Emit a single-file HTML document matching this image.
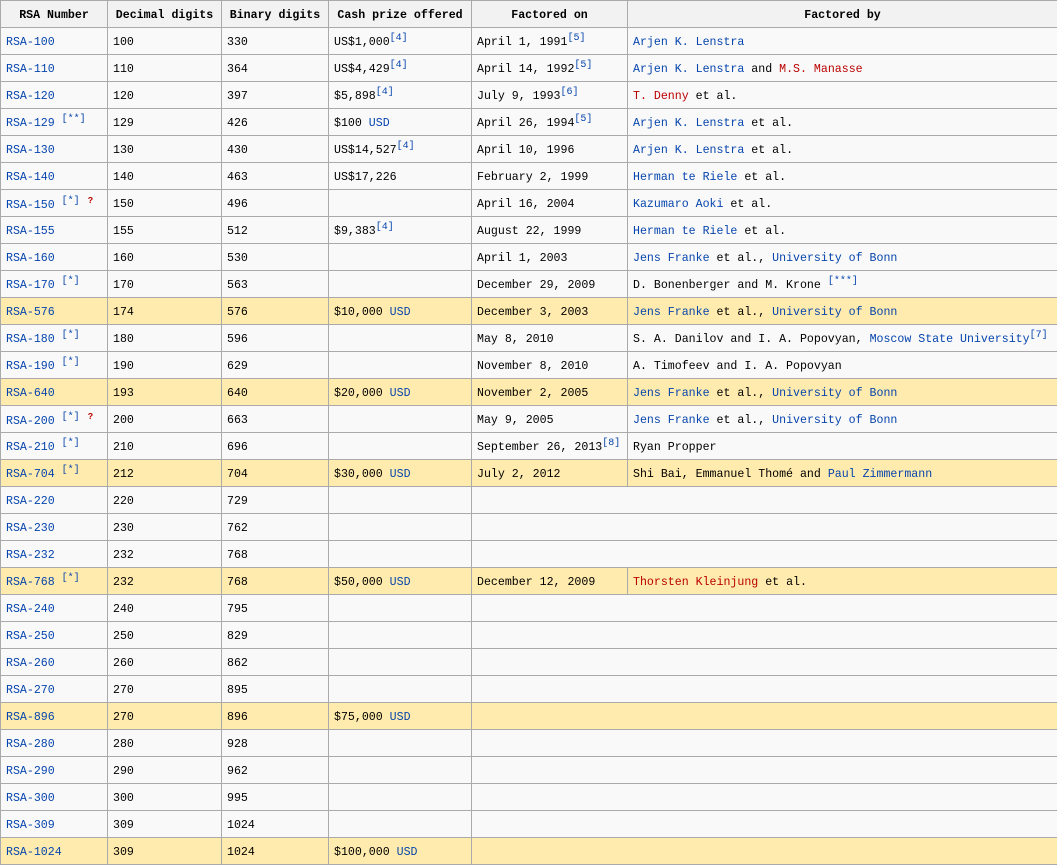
<!DOCTYPE html>
<html><head><meta charset="utf-8"><style>
body{margin:0;background:#fff;}
table{border-collapse:collapse;table-layout:fixed;width:1057px;background:#f9f9f9;font-family:"Liberation Mono","Noto Serif CJK SC",monospace;font-size:11.6px;color:#000;}
td,th{border:1px solid #aaa;height:24px;padding:2px 5px 0 5px;white-space:nowrap;overflow:hidden;}
th{background:#f2f2f2;font-weight:bold;height:24px;}
tr.h td{background:#ffebad;}
a{color:#0645ad;text-decoration:none;}
a.r{color:#ba0000;}
sup{font-size:10px;line-height:0;vertical-align:5px;}
sup a{color:#0645ad;}
.q{color:#ba0000;font-weight:bold;font-size:9px;margin-left:8px;vertical-align:5px;}
</style></head><body>
<table>
<colgroup><col style="width:107px"><col style="width:114px"><col style="width:107px"><col style="width:143px"><col style="width:156px"><col style="width:430px"></colgroup>
<tr><th>RSA Number</th><th>Decimal digits</th><th>Binary digits</th><th>Cash prize offered</th><th>Factored on</th><th>Factored by</th></tr>
<tr><td><a>RSA-100</a></td><td>100</td><td>330</td><td>US$1,000<sup><a>[4]</a></sup></td><td>April 1, 1991<sup><a>[5]</a></sup></td><td><a>Arjen K. Lenstra</a></td></tr>
<tr><td><a>RSA-110</a></td><td>110</td><td>364</td><td>US$4,429<sup><a>[4]</a></sup></td><td>April 14, 1992<sup><a>[5]</a></sup></td><td><a>Arjen K. Lenstra</a> and <a class="r">M.S. Manasse</a></td></tr>
<tr><td><a>RSA-120</a></td><td>120</td><td>397</td><td>$5,898<sup><a>[4]</a></sup></td><td>July 9, 1993<sup><a>[6]</a></sup></td><td><a class="r">T. Denny</a> et al.</td></tr>
<tr><td><a>RSA-129</a> <sup><a>[**]</a></sup></td><td>129</td><td>426</td><td>$100 <a>USD</a></td><td>April 26, 1994<sup><a>[5]</a></sup></td><td><a>Arjen K. Lenstra</a> et al.</td></tr>
<tr><td><a>RSA-130</a></td><td>130</td><td>430</td><td>US$14,527<sup><a>[4]</a></sup></td><td>April 10, 1996</td><td><a>Arjen K. Lenstra</a> et al.</td></tr>
<tr><td><a>RSA-140</a></td><td>140</td><td>463</td><td>US$17,226</td><td>February 2, 1999</td><td><a>Herman te Riele</a> et al.</td></tr>
<tr><td><a>RSA-150</a> <sup><a>[*]</a></sup><span class="q">?</span></td><td>150</td><td>496</td><td></td><td>April 16, 2004</td><td><a>Kazumaro Aoki</a> et al.</td></tr>
<tr><td><a>RSA-155</a></td><td>155</td><td>512</td><td>$9,383<sup><a>[4]</a></sup></td><td>August 22, 1999</td><td><a>Herman te Riele</a> et al.</td></tr>
<tr><td><a>RSA-160</a></td><td>160</td><td>530</td><td></td><td>April 1, 2003</td><td><a>Jens Franke</a> et al., <a>University of Bonn</a></td></tr>
<tr><td><a>RSA-170</a> <sup><a>[*]</a></sup></td><td>170</td><td>563</td><td></td><td>December 29, 2009</td><td>D. Bonenberger and M. Krone <sup><a>[***]</a></sup></td></tr>
<tr class="h"><td><a>RSA-576</a></td><td>174</td><td>576</td><td>$10,000 <a>USD</a></td><td>December 3, 2003</td><td><a>Jens Franke</a> et al., <a>University of Bonn</a></td></tr>
<tr><td><a>RSA-180</a> <sup><a>[*]</a></sup></td><td>180</td><td>596</td><td></td><td>May 8, 2010</td><td>S. A. Danilov and I. A. Popovyan, <a>Moscow State University</a><sup><a>[7]</a></sup></td></tr>
<tr><td><a>RSA-190</a> <sup><a>[*]</a></sup></td><td>190</td><td>629</td><td></td><td>November 8, 2010</td><td>A. Timofeev and I. A. Popovyan</td></tr>
<tr class="h"><td><a>RSA-640</a></td><td>193</td><td>640</td><td>$20,000 <a>USD</a></td><td>November 2, 2005</td><td><a>Jens Franke</a> et al., <a>University of Bonn</a></td></tr>
<tr><td><a>RSA-200</a> <sup><a>[*]</a></sup><span class="q">?</span></td><td>200</td><td>663</td><td></td><td>May 9, 2005</td><td><a>Jens Franke</a> et al., <a>University of Bonn</a></td></tr>
<tr><td><a>RSA-210</a> <sup><a>[*]</a></sup></td><td>210</td><td>696</td><td></td><td>September 26, 2013<sup><a>[8]</a></sup></td><td>Ryan Propper</td></tr>
<tr class="h"><td><a>RSA-704</a> <sup><a>[*]</a></sup></td><td>212</td><td>704</td><td>$30,000 <a>USD</a></td><td>July 2, 2012</td><td>Shi Bai, Emmanuel Thomé and <a>Paul Zimmermann</a></td></tr>
<tr><td><a>RSA-220</a></td><td>220</td><td>729</td><td></td><td colspan="2"></td></tr>
<tr><td><a>RSA-230</a></td><td>230</td><td>762</td><td></td><td colspan="2"></td></tr>
<tr><td><a>RSA-232</a></td><td>232</td><td>768</td><td></td><td colspan="2"></td></tr>
<tr class="h"><td><a>RSA-768</a> <sup><a>[*]</a></sup></td><td>232</td><td>768</td><td>$50,000 <a>USD</a></td><td>December 12, 2009</td><td><a class="r">Thorsten Kleinjung</a> et al.</td></tr>
<tr><td><a>RSA-240</a></td><td>240</td><td>795</td><td></td><td colspan="2"></td></tr>
<tr><td><a>RSA-250</a></td><td>250</td><td>829</td><td></td><td colspan="2"></td></tr>
<tr><td><a>RSA-260</a></td><td>260</td><td>862</td><td></td><td colspan="2"></td></tr>
<tr><td><a>RSA-270</a></td><td>270</td><td>895</td><td></td><td colspan="2"></td></tr>
<tr class="h"><td><a>RSA-896</a></td><td>270</td><td>896</td><td>$75,000 <a>USD</a></td><td colspan="2"></td></tr>
<tr><td><a>RSA-280</a></td><td>280</td><td>928</td><td></td><td colspan="2"></td></tr>
<tr><td><a>RSA-290</a></td><td>290</td><td>962</td><td></td><td colspan="2"></td></tr>
<tr><td><a>RSA-300</a></td><td>300</td><td>995</td><td></td><td colspan="2"></td></tr>
<tr><td><a>RSA-309</a></td><td>309</td><td>1024</td><td></td><td colspan="2"></td></tr>
<tr class="h"><td><a>RSA-1024</a></td><td>309</td><td>1024</td><td>$100,000 <a>USD</a></td><td colspan="2"></td></tr>
</table>
</body></html>
